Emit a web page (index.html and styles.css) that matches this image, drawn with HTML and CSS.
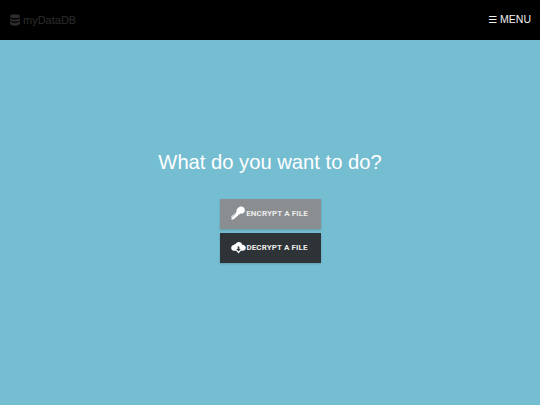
FILE: index.html
```html
<!DOCTYPE html>
<html lang="en">
<head>
<meta charset="utf-8">
<title>myDataDB</title>
<link rel="stylesheet" href="styles.css">
</head>
<body>
<header class="topbar">
  <a class="brand" href="#">
    <svg class="brand-icon" viewBox="0 0 14 14" aria-hidden="true">
      <ellipse cx="7" cy="2.600" rx="5.800" ry="2.300"/>
      <path d="M1.200 4.400c.8 1.500 3.300 2.200 5.800 2.200s5-.7 5.800-2.200v2.300c0 1.300-2.700 2.300-5.800 2.300s-5.800-1-5.800-2.300z"/>
      <path d="M1.200 8.200c.8 1.500 3.300 2.200 5.800 2.200s5-.7 5.800-2.200v3c0 1.300-2.700 2.400-5.800 2.400s-5.800-1.100-5.800-2.400z"/>
    </svg>
    <span>myDataDB</span>
  </a>
  <a class="menu" href="#"><span class="menu-glyph">☰</span> MENU</a>
</header>
<main class="content">
  <h1 class="question">What do you want to do?</h1>
  <div class="actions">
    <a class="btn btn-encrypt" href="#">
      <svg class="btn-icon" viewBox="0 0 16 16" aria-hidden="true">
        <path d="M9.300.8c2-.8 4.300.1 5.200 2 .7 1.600.3 3.400-1 4.500-1 .9-2.400 1.200-3.700.8L8.600 9.400l-1.200-.1.100 1.300-1.300.1v1.300l-1.400.1-1.400 1.700-2.700.8-.3-1.200 4.900-5.300-.4-.4-4.500 4.800-.1-1.400L5.900 6.400C5.500 4 6.800 1.800 9.300.8z"/>
      </svg>
      <span>ENCRYPT A FILE</span>
    </a>
    <a class="btn btn-decrypt" href="#">
      <svg class="btn-icon" viewBox="0 0 16 16" aria-hidden="true">
        <path d="M8.200 2c1.900 0 3.500 1.300 3.900 3.100 2 .1 3.700 1.400 3.700 3.200 0 1.900-1.600 3.200-3.500 3.200h-1.800l-2.500 3-2.500-3H3.700C1.700 11.500.2 10.200.2 8.400c0-1.600 1.100-2.800 2.800-3 .4-.8 1.200-1.200 2-1.100C5.600 3 6.800 2 8.200 2z"/>
        <path class="cut" d="M7.100 7h1.800v2.600h1.500L8 12.300 5.600 9.600h1.500z"/>
      </svg>
      <span>DECRYPT A FILE</span>
    </a>
  </div>
</main>
</body>
</html>
```
FILE: styles.css
```css
* { box-sizing: border-box; }
html, body { height: 100%; }
body {
  margin: 0;
  display: flex;
  flex-direction: column;
  background: #75bdd1;
  font-family: "Liberation Sans", Arial, sans-serif;
  color: #fff;
}
a { text-decoration: none; color: inherit; }
.topbar {
  height: 40px;
  flex: none;
  background: #000;
  display: flex;
  align-items: center;
  justify-content: space-between;
  padding: 0 9px 0 9px;
}
.brand {
  display: flex;
  align-items: center;
  gap: 2px;
  font-family: "Liberation Sans", sans-serif;
  font-size: 11px;
  color: #2d2d2d;
}
.brand-icon { width: 12px; height: 14px; fill: #2d2d2d; }
.menu { margin-bottom: 2px; font-size: 10.500px; color: #f2f2f2; }
.menu-glyph { font-family: "DejaVu Sans", sans-serif; font-size: 10px; }
.content {
  flex: 1;
  display: flex;
  flex-direction: column;
  align-items: center;
  padding-top: 108px;
}
.question {
  margin: 0 0 23px;
  font-size: 20.200px;
  line-height: 28px;
  font-weight: 400;
}
.actions { display: flex; flex-direction: column; gap: 4px; }
.btn {
  width: 101px;
  height: 30px;
  padding-bottom: 1px;
  display: flex;
  align-items: center;
  justify-content: center;
  font-family: Roboto, "Liberation Sans", sans-serif;
  font-size: 8px;
  font-weight: 700;
  letter-spacing: .1px;
  color: #ececec;
  box-shadow: 0 1px 2px rgba(0, 0, 0, .18);
}
.btn-encrypt { background: #8b8e90; }
.btn-decrypt { background: #2d3336; }
.btn-icon { width: 15px; height: 15px; margin-left: -1px; fill: #fff; }
.btn-icon .cut { fill: #2d3336; }
```
